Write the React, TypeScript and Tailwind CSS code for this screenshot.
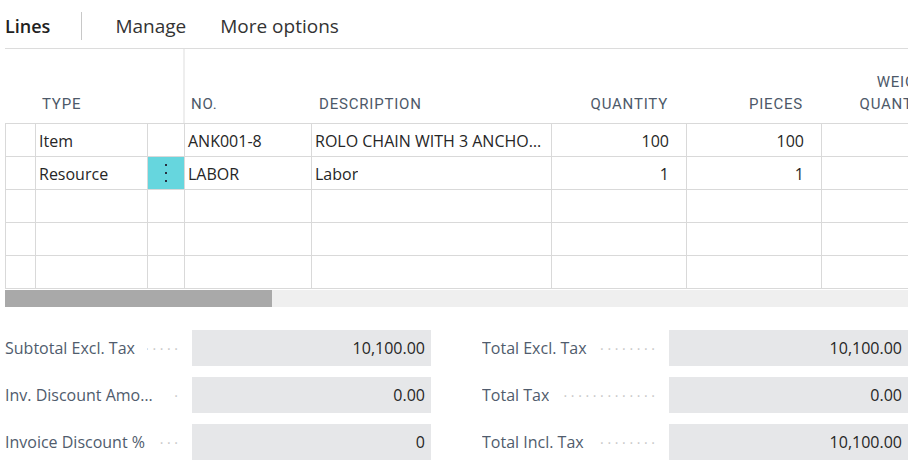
import React from 'react';

type Line = { type: string; no: string; desc: string; qty: string; pcs: string; active?: boolean };

const lines: Line[] = [
  { type: 'Item', no: 'ANK001-8', desc: 'ROLO CHAIN WITH 3 ANCHOR LINKS', qty: '100', pcs: '100' },
  { type: 'Resource', no: 'LABOR', desc: 'Labor', qty: '1', pcs: '1', active: true },
  { type: '', no: '', desc: '', qty: '', pcs: '' },
  { type: '', no: '', desc: '', qty: '', pcs: '' },
  { type: '', no: '', desc: '', qty: '', pcs: '' },
];

const totalsLeft = [
  { label: 'Subtotal Excl. Tax', value: '10,100.00' },
  { label: 'Inv. Discount Amount Excl. Tax', value: '0.00' },
  { label: 'Invoice Discount %', value: '0' },
];

const totalsRight = [
  { label: 'Total Excl. Tax', value: '10,100.00' },
  { label: 'Total Tax', value: '0.00' },
  { label: 'Total Incl. Tax', value: '10,100.00' },
];

function Dots() {
  return (
    <svg width="8" height="18" viewBox="0 0 8 18" className="text-[#263040]">
      <rect x="3" y="0" width="2" height="2" fill="currentColor" />
      <rect x="3" y="8" width="2" height="2" fill="currentColor" />
      <rect x="3" y="16" width="2" height="2" fill="currentColor" />
    </svg>
  );
}

function TotalField({ label, value }: { label: string; value: string }) {
  return (
    <div className="flex items-center h-[36px]">
      <div className="w-[187px] flex items-center pr-[14px] min-w-0">
        <span className="text-[16px] text-[#505c6d] whitespace-nowrap overflow-hidden text-ellipsis shrink min-w-0">{label}</span>
        <span className="flex-1 ml-[12px] flex justify-end overflow-hidden whitespace-nowrap text-[14px] text-[#c8c8c8] min-w-[8px]">
          · · · · · · · · · · · · · · · · · · · ·
        </span>
      </div>
      <div className="flex-1 h-full bg-[#e6e7e9] flex items-center justify-end pr-[6px] text-[16px] text-[#262626]">
        {value}
      </div>
    </div>
  );
}

export default function App() {
  const cell = 'h-full border-r border-[#d9d9d9] flex items-center shrink-0 pt-[2px]';
  return (
    <div className="w-[919px] h-[465px] bg-white overflow-hidden font-['Open_Sans',sans-serif] text-[#262626]">
      {/* Action bar */}
      <div className="ml-[5px] mr-[11px] h-[49px] border-b border-[#dcdcdc] flex items-center pt-[4px]">
        <span className="text-[18px] font-semibold text-[#212121]">Lines</span>
        <div className="ml-[31px] w-px h-[28px] bg-[#c8c8c8]" />
        <span className="ml-[33px] text-[19px] text-[#333]">Manage</span>
        <span className="ml-[34px] text-[19px] text-[#333]">More options</span>
      </div>

      {/* Grid */}
      <div className="ml-[5px] w-[903px] overflow-hidden">
        <div className="w-[1100px]">
          {/* header */}
          <div className="flex h-[74px] items-end font-['Roboto',sans-serif] text-[15px] tracking-[0.8px] text-[#4d5969] leading-[22px]">
            <div className="w-[31px] shrink-0" />
            <div className="w-[112px] shrink-0 pl-[6px] pb-[8px]">TYPE</div>
            <div className="w-[37px] shrink-0 h-full border-r-2 border-[#eeeeee]" />
            <div className="w-[127px] shrink-0 pl-[6px] pb-[8px]">NO.</div>
            <div className="w-[240px] shrink-0 pl-[7px] pb-[8px]">DESCRIPTION</div>
            <div className="w-[135px] shrink-0 pr-[19px] pb-[8px] text-right">QUANTITY</div>
            <div className="w-[135px] shrink-0 pr-[19px] pb-[8px] text-right">PIECES</div>
            <div className="w-[135px] shrink-0 pr-[20px] pb-[8px] text-right">
              WEIGHT
              <br />
              QUANTITY
            </div>
          </div>
          {/* body */}
          <div className="border-t border-[#d9d9d9] text-[16px]">
            {lines.map((l, i) => (
              <div key={i} className="flex h-[33px] border-b border-[#d9d9d9]">
                <div className={`${cell} w-[31px] border-l`} />
                <div className={`${cell} w-[112px] pl-[3px]`}>{l.type}</div>
                <div className={`h-full border-r border-[#d9d9d9] flex items-center shrink-0 w-[37px] justify-center ${l.active ? 'bg-[#66d6de]' : ''}`}>
                  {l.active && <Dots />}
                </div>
                <div className={`${cell} w-[127px] pl-[3px]`}>{l.no}</div>
                <div className={`${cell} w-[240px] pl-[3px] pr-[2px] min-w-0`}>
                  <span className="whitespace-nowrap overflow-hidden text-ellipsis">{l.desc}</span>
                </div>
                <div className={`${cell} w-[135px] justify-end pr-[17px]`}>{l.qty}</div>
                <div className={`${cell} w-[135px] justify-end pr-[17px]`}>{l.pcs}</div>
                <div className={`${cell} w-[135px]`} />
              </div>
            ))}
          </div>
        </div>
        {/* horizontal scrollbar */}
        <div className="mt-[1px] h-[17px] bg-[#efefef]">
          <div className="w-[267px] h-full bg-[#a9a9a9]" />
        </div>
      </div>

      {/* Totals */}
      <div className="mt-[23px] ml-[5px] w-[903px] flex gap-[51px]">
        <div className="w-[426px] flex flex-col gap-[11px]">
          {totalsLeft.map((t) => (
            <TotalField key={t.label} {...t} />
          ))}
        </div>
        <div className="w-[426px] flex flex-col gap-[11px]">
          {totalsRight.map((t) => (
            <TotalField key={t.label} {...t} />
          ))}
        </div>
      </div>
    </div>
  );
}
